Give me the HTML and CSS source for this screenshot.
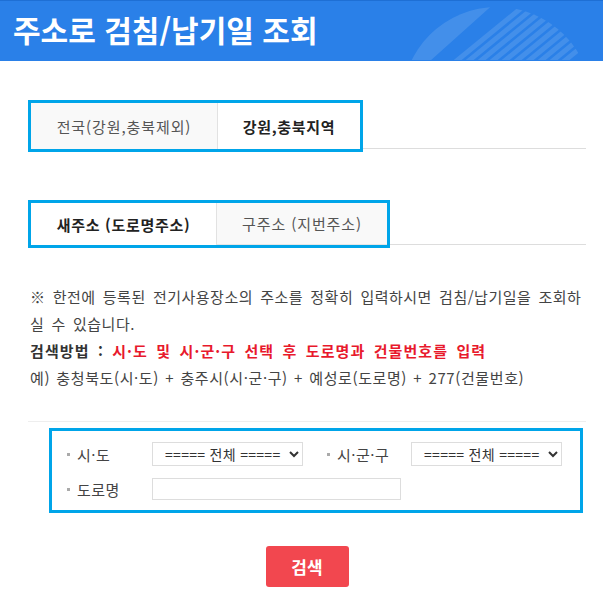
FILE: index.html
```html
<!DOCTYPE html>
<html lang="ko">
<head>
<meta charset="utf-8">
<title>주소로 검침/납기일 조회</title>
<link rel="stylesheet" href="styles.css">
</head>
<body>
<header class="top">
  <h1 class="title">주소로 검침/납기일 조회</h1>
  <svg class="deco" width="223" height="59" viewBox="0 0 223 59" aria-hidden="true">
    <defs>
      <clipPath id="circ"><circle cx="117" cy="101" r="95"/></clipPath>
    </defs>
    <g clip-path="url(#circ)" fill="#ffffff" fill-opacity="0.12">
      <polygon points="0,0 117,0 50,60 0,60"/>
      <g stroke="#ffffff" stroke-opacity="0.12" stroke-width="5" fill="none">
        <line x1="150" y1="0" x2="74" y2="62"/>
        <line x1="162" y1="0" x2="86" y2="62"/>
        <line x1="174" y1="0" x2="98" y2="62"/>
        <line x1="186" y1="0" x2="110" y2="62"/>
        <line x1="198" y1="0" x2="122" y2="62"/>
        <line x1="210" y1="0" x2="134" y2="62"/>
        <line x1="222" y1="0" x2="146" y2="62"/>
        <line x1="234" y1="0" x2="158" y2="62"/>
        <line x1="246" y1="0" x2="170" y2="62"/>
        <line x1="258" y1="0" x2="182" y2="62"/>
      </g>
    </g>
  </svg>
</header>

<main class="content">
  <div class="tabs tabs-area">
    <div class="tab-box">
      <div class="tab tab-off area-1">전국(강원,충북제외)</div>
      <div class="tab tab-on area-2">강원,충북지역</div>
    </div>
    <div class="tab-line"></div>
  </div>

  <div class="tabs tabs-addr">
    <div class="tab-box">
      <div class="tab tab-on addr-1">새주소 (도로명주소)</div>
      <div class="tab tab-off addr-2">구주소 (지번주소)</div>
    </div>
    <div class="tab-line"></div>
  </div>

  <div class="desc">
    <p class="notice">※ 한전에 등록된 전기사용장소의 주소를 정확히 입력하시면 검침/납기일을 조회하실 수 있습니다.</p>
    <p class="method"><span class="method-label">검색방법 :</span> <span class="method-red">시·도 및 시·군·구 선택 후 도로명과 건물번호를 입력</span></p>
    <p class="example">예) 충청북도(시·도) + 충주시(시·군·구) + 예성로(도로명) + 277(건물번호)</p>
  </div>

  <div class="search-area">
    <div class="search-box">
      <div class="row">
        <label class="label"><span class="dot"></span>시·도</label>
        <select class="sel">
          <option>===== 전체 =====</option>
        </select>
        <label class="label label-2"><span class="dot"></span>시·군·구</label>
        <select class="sel">
          <option>===== 전체 =====</option>
        </select>
      </div>
      <div class="row row-2">
        <label class="label"><span class="dot"></span>도로명</label>
        <input class="road" type="text">
      </div>
    </div>
  </div>

  <div class="btn-wrap">
    <button class="btn" type="button">검색</button>
  </div>
</main>
</body>
</html>
```

FILE: styles.css
```css
* { box-sizing: border-box; }

body {
  margin: 0;
  background: #fff;
  font-family: "Noto Sans CJK KR", "Noto Sans", sans-serif;
  color: #444;
}

.top {
  position: relative;
  height: 61px;
  background: #2a80e8;
  border-top: 1px solid #1e6fd4;
  overflow: hidden;
  display: flex;
  align-items: center;
}

.title {
  margin: 0;
  padding-left: 13px;
  font-size: 30px;
  font-weight: 700;
  color: #fff;
  line-height: 1;
  margin-top: -4px;
  position: relative;
  z-index: 1;
}

.deco {
  position: absolute;
  left: 380px;
  top: 0;
}

.content {
  margin-left: 28px;
  width: 558px;
}

.tabs {
  display: flex;
}

.tabs-area { margin-top: 39px; }
.tabs-addr { margin-top: 48px; }

.tab-box {
  display: flex;
  border: 3px solid #00a5e9;
}

.tab {
  display: flex;
  align-items: center;
  justify-content: center;
  font-size: 15px;
  letter-spacing: 0.9px;
}

.tab-off {
  background: #f9f9f9;
  color: #555;
}

.tab-on {
  background: #fff;
  color: #222;
  font-weight: 700;
  letter-spacing: 0.7px;
}

.area-1 { width: 187px; height: 46px; border-right: 1px solid #e2e2e2; }
.area-2 { width: 142px; height: 46px; }

.addr-1 { width: 185px; height: 42px; }
.addr-2 {
  width: 171px;
  height: 42px;
  border-left: 1px solid #e2e2e2;
  border-bottom: 1px solid #e6e6e6;
}

.tab-line {
  flex: 1;
  align-self: flex-end;
  margin-bottom: 3px;
  border-bottom: 1px solid #ddd;
}

.desc {
  margin-top: 35px;
  padding-left: 2px;
  font-size: 15px;
  line-height: 27px;
  color: #444;
}

.desc p { margin: 0; }

.notice {
  letter-spacing: 0.5px;
  word-spacing: 2.5px;
}

.method {
  font-weight: 700;
  letter-spacing: 1.1px;
  word-spacing: 3px;
}
.method-label { color: #333; }
.method-red { color: #e8192c; }

.example {
  letter-spacing: 0.6px;
  word-spacing: 1.5px;
}

.search-area {
  margin-top: 30px;
  border-top: 1px solid #eee;
  padding-top: 6px;
  padding-left: 21px;
  padding-right: 3px;
}

.search-box {
  border: 3px solid #00a5e9;
  padding: 11px 0 10px 0;
}

.row {
  display: flex;
  align-items: center;
  height: 24px;
}

.row-2 {
  margin-top: 12px;
  height: 22px;
}

.label {
  display: flex;
  align-items: center;
  width: 100px;
  padding-left: 15px;
  font-size: 15px;
  color: #444;
  letter-spacing: 0.5px;
}

.label-2 {
  width: 108px;
  padding-left: 24px;
}

.dot {
  width: 3px;
  height: 3px;
  background: #aaa;
  margin-right: 7px;
}

.sel {
  width: 151px;
  height: 24px;
  border: 1px solid #ddd;
  background: #fff;
  font-family: "Noto Sans CJK KR", "Noto Sans", sans-serif;
  font-size: 14px;
  letter-spacing: 0.3px;
  color: #333;
  padding: 0 0 0 8px;
}

.road {
  width: 249px;
  height: 22px;
  border: 1px solid #ddd;
  background: #fff;
}

.btn-wrap {
  margin-top: 33px;
  display: flex;
  justify-content: center;
}

.btn {
  width: 83px;
  height: 41px;
  border: 0;
  border-radius: 3px;
  background: #f2474f;
  color: #fff;
  font-family: "Noto Sans CJK KR", "Noto Sans", sans-serif;
  font-size: 17px;
  font-weight: 700;
}
```
